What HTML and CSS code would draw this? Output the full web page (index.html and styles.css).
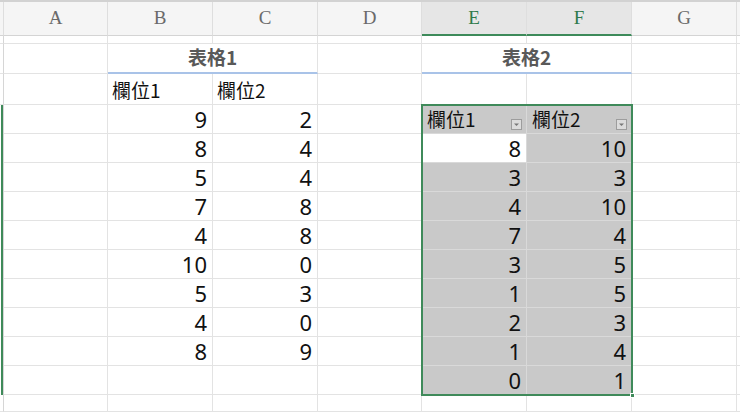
FILE: index.html
```html
<!DOCTYPE html>
<html lang="zh-Hant">
<head>
<meta charset="utf-8">
<title>Sheet</title>
<link rel="stylesheet" href="styles.css">
</head>
<body>
<div class="sheet">
  <!-- column header row -->
  <div class="hd"></div>
  <div class="hd">A</div><div class="hd">B</div><div class="hd">C</div><div class="hd">D</div>
  <div class="hd sel">E</div><div class="hd sel">F</div><div class="hd">G</div><div class="hd end"></div>

  <!-- row 1 (partially scrolled) -->
  <div class="rh"></div>
  <div class="c"></div><div class="c"></div><div class="c"></div><div class="c"></div>
  <div class="c"></div><div class="c"></div><div class="c"></div><div class="e"></div>

  <!-- titles -->
  <div class="rh"></div>
  <div class="c"></div>
  <div class="c title">表格1</div>
  <div class="c"></div>
  <div class="c title">表格2</div>
  <div class="c"></div><div class="e"></div>

  <!-- table 1 field names -->
  <div class="rh"></div>
  <div class="c"></div>
  <div class="c t">欄位1</div><div class="c t">欄位2</div>
  <div class="c"></div><div class="c"></div><div class="c"></div><div class="c"></div><div class="e"></div>

  <!-- data rows -->
  <div class="rh sel"></div>
  <div class="c"></div><div class="c">9</div><div class="c">2</div><div class="c"></div>
  <div class="c g t head">欄位1<span class="filter"><svg viewBox="0 0 9 9" width="9" height="9"><path d="M2 3.5h5L4.5 6z" fill="#777"/></svg></span></div>
  <div class="c g t head">欄位2<span class="filter"><svg viewBox="0 0 9 9" width="9" height="9"><path d="M2 3.5h5L4.5 6z" fill="#777"/></svg></span></div>
  <div class="c"></div><div class="e"></div>

  <div class="rh sel"></div>
  <div class="c"></div><div class="c">8</div><div class="c">4</div><div class="c"></div>
  <div class="c g w">8</div><div class="c g">10</div><div class="c"></div><div class="e"></div>

  <div class="rh sel"></div>
  <div class="c"></div><div class="c">5</div><div class="c">4</div><div class="c"></div>
  <div class="c g">3</div><div class="c g">3</div><div class="c"></div><div class="e"></div>

  <div class="rh sel"></div>
  <div class="c"></div><div class="c">7</div><div class="c">8</div><div class="c"></div>
  <div class="c g">4</div><div class="c g">10</div><div class="c"></div><div class="e"></div>

  <div class="rh sel"></div>
  <div class="c"></div><div class="c">4</div><div class="c">8</div><div class="c"></div>
  <div class="c g">7</div><div class="c g">4</div><div class="c"></div><div class="e"></div>

  <div class="rh sel"></div>
  <div class="c"></div><div class="c">10</div><div class="c">0</div><div class="c"></div>
  <div class="c g">3</div><div class="c g">5</div><div class="c"></div><div class="e"></div>

  <div class="rh sel"></div>
  <div class="c"></div><div class="c">5</div><div class="c">3</div><div class="c"></div>
  <div class="c g">1</div><div class="c g">5</div><div class="c"></div><div class="e"></div>

  <div class="rh sel"></div>
  <div class="c"></div><div class="c">4</div><div class="c">0</div><div class="c"></div>
  <div class="c g">2</div><div class="c g">3</div><div class="c"></div><div class="e"></div>

  <div class="rh sel"></div>
  <div class="c"></div><div class="c">8</div><div class="c">9</div><div class="c"></div>
  <div class="c g">1</div><div class="c g">4</div><div class="c"></div><div class="e"></div>

  <div class="rh sel"></div>
  <div class="c"></div><div class="c"></div><div class="c"></div><div class="c"></div>
  <div class="c g">0</div><div class="c g">1</div><div class="c"></div><div class="e"></div>

  <div class="rh"></div>
  <div class="c"></div><div class="c"></div><div class="c"></div><div class="c"></div>
  <div class="c"></div><div class="c"></div><div class="c"></div><div class="e"></div>

  <div class="selection"><span class="handle"></span></div>
</div>
</body>
</html>
```

FILE: styles.css
```css
* { box-sizing: border-box; }
html, body { margin: 0; padding: 0; background: #fff; overflow: hidden; }

.sheet {
  position: relative;
  width: 740px;
  height: 412px;
  border-top: 2px solid #d2d2d2;
  display: grid;
  grid-template-columns: 4px 104px 105px 105px 104px 105px 105px 105px 3px;
  grid-template-rows: 34px 8px 30px 31px repeat(9, 29px) 29px 1fr;
  font-family: "Noto Sans", "Noto Sans CJK TC", sans-serif;
  font-size: 22px;
  color: #111;
}

.hd {
  background: #f5f5f5;
  border-right: 1px solid #dedede;
  border-bottom: 1px solid #d4d4d4;
  font-family: "Liberation Serif", serif;
  font-size: 19px;
  color: #6a6a6a;
  display: flex;
  align-items: center;
  justify-content: center;
  padding-bottom: 2px;
}
.hd.end { border-right: none; }
.hd.sel {
  background: #e6e6e6;
  color: #2f7a4b;
  border-bottom: 2px solid #3d8a5a;
  padding-bottom: 1px;
}

.rh {
  border-right: 1px solid #d6d6d6;
  border-bottom: 1px solid #e4e4e4;
}
.rh.sel {
  background: linear-gradient(to right, #fff 0 1px, #3f8a5a 1px 3px);
  border-bottom: none;
}

.c {
  position: relative;
  border-right: 1px solid #e3e3e3;
  border-bottom: 1px solid #e3e3e3;
  display: flex;
  align-items: flex-end;
  justify-content: flex-end;
  padding: 0 5px 1px 4px;
  line-height: 1.2;
  white-space: nowrap;
}
.e { border-bottom: 1px solid #e3e3e3; }

.t {
  justify-content: flex-start;
  font-family: "Noto Sans CJK TC", sans-serif;
  font-size: 19px;
  padding-left: 4px;
  padding-bottom: 2px;
}

.title {
  grid-column: span 2;
  justify-content: center;
  align-items: center;
  font-family: "Noto Sans CJK TC", sans-serif;
  font-weight: bold;
  font-size: 19px;
  color: #595959;
  border-bottom: 2px solid #a9c3e8;
  padding: 0 0 1px;
}

.g {
  background: #c9c9c9;
  border-right-color: #d9d9d9;
  border-bottom-color: #d9d9d9;
}
.g.w { background: #fff; }

.head { padding-left: 5px; }

.filter {
  position: absolute;
  right: 4px;
  bottom: 3px;
  width: 11px;
  height: 11px;
  background: #dcdcdc;
  border: 1px solid #9d9d9d;
  display: flex;
  align-items: center;
  justify-content: center;
}
.filter svg { display: block; }

.selection {
  position: absolute;
  left: 421px;
  top: 102px;
  width: 212px;
  height: 292px;
  border: 2px solid #3f8a5a;
  pointer-events: none;
}
.handle {
  position: absolute;
  right: -4px;
  bottom: -4px;
  width: 5px;
  height: 5px;
  background: #3f8a5a;
  border: 1px solid #fff;
}
```
